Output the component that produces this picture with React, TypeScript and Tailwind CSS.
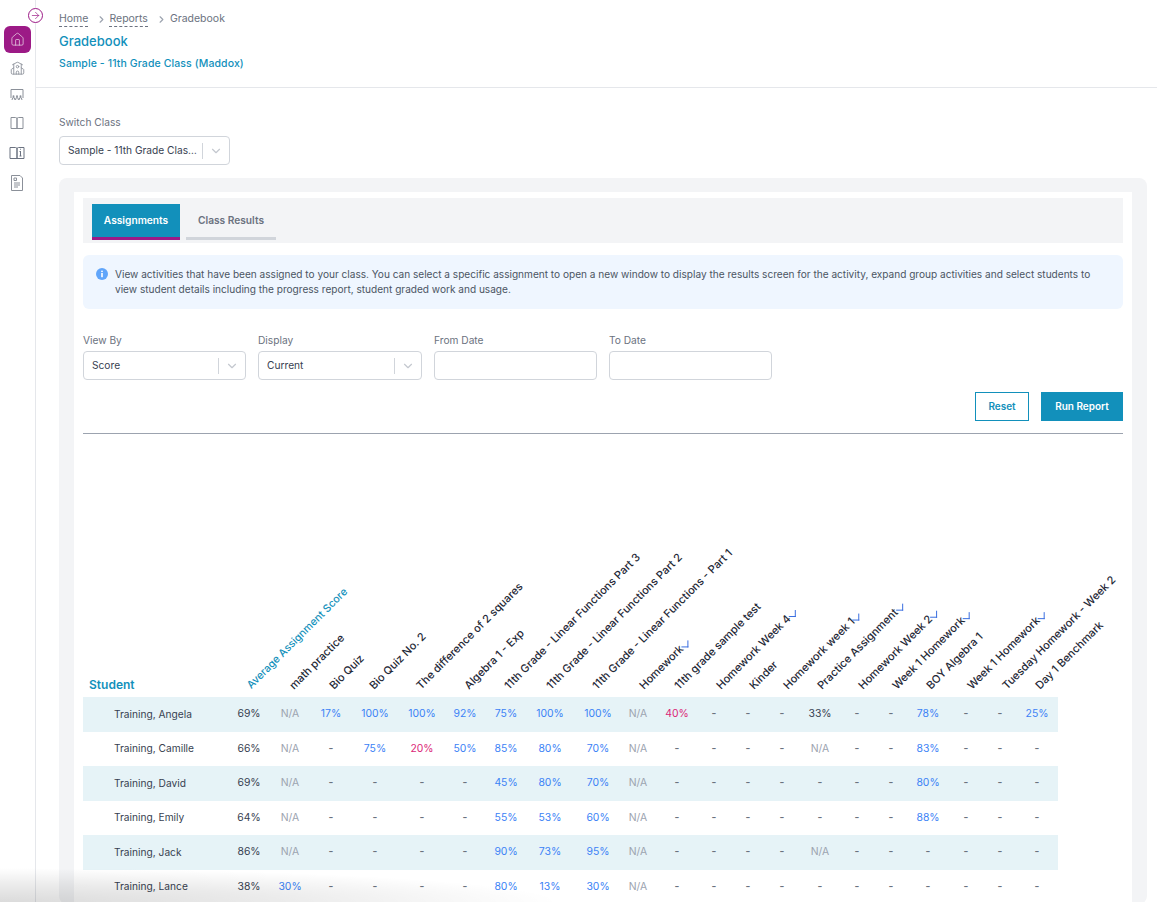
import { ArrowRight, ChevronDown, ChevronRight, House, School } from "lucide-react"

const columns = [
  { name: "Average Assignment Score", col: "w-[30px]", shift: "ml-[20px] text-[10.6px] text-[#1290bb]" },
  { name: "math practice", col: "w-[52px]", shift: "ml-[32px]" },
  { name: "Bio Quiz", col: "w-[30px]", shift: "ml-[20px]" },
  { name: "Bio Quiz No. 2", col: "w-[58px]", shift: "ml-[30px]" },
  { name: "The difference of 2 squares", col: "w-[36px]", shift: "ml-[19px]" },
  { name: "Algebra 1 - Exp", col: "w-[50px]", shift: "ml-[31px]" },
  { name: "11th Grade - Linear Functions Part 3", col: "w-[32px]", shift: "ml-[21px]" },
  { name: "11th Grade - Linear Functions Part 2", col: "w-[56px]", shift: "ml-[31px]" },
  { name: "11th Grade - Linear Functions - Part 1", col: "w-[40px]", shift: "ml-[21px]" },
  { name: "Homework", col: "w-[40px]", shift: "ml-[28px]", mark: true },
  { name: "11th grade sample test", col: "w-[38px]", shift: "ml-[23px]" },
  { name: "Homework Week 4", col: "w-[36px]", shift: "ml-[27px]", mark: true },
  { name: "Kinder", col: "w-[32px]", shift: "ml-[24px]" },
  { name: "Homework week 1", col: "w-[36px]", shift: "ml-[26px]", mark: true },
  { name: "Practice Assignment", col: "w-[40px]", shift: "ml-[24px]", mark: true },
  { name: "Homework Week 2", col: "w-[34px]", shift: "ml-[25px]", mark: true },
  { name: "Week 1 Homework", col: "w-[34px]", shift: "ml-[25px]", mark: true },
  { name: "BOY Algebra 1", col: "w-[40px]", shift: "ml-[25px]" },
  { name: "Week 1 Homework", col: "w-[36px]", shift: "ml-[26px]", mark: true },
  { name: "Tuesday Homework - Week 2", col: "w-[32px]", shift: "ml-[25px]" },
  { name: "Day 1 Benchmark", col: "w-[42px]", shift: "ml-[26px]" },
]

const students = [
  { name: "Training, Angela", scores: ["69%", "N/A", "17%", "100%", "100%", "92%", "75%", "100%", "100%", "N/A", "!40%", "-", "-", "-", "#33%", "-", "-", "78%", "-", "-", "25%"] },
  { name: "Training, Camille", scores: ["66%", "N/A", "-", "75%", "!20%", "50%", "85%", "80%", "70%", "N/A", "-", "-", "-", "-", "N/A", "-", "-", "83%", "-", "-", "-"] },
  { name: "Training, David", scores: ["69%", "N/A", "-", "-", "-", "-", "45%", "80%", "70%", "N/A", "-", "-", "-", "-", "-", "-", "-", "80%", "-", "-", "-"] },
  { name: "Training, Emily", scores: ["64%", "N/A", "-", "-", "-", "-", "55%", "53%", "60%", "N/A", "-", "-", "-", "-", "-", "-", "-", "88%", "-", "-", "-"] },
  { name: "Training, Jack", scores: ["86%", "N/A", "-", "-", "-", "-", "90%", "73%", "95%", "N/A", "-", "-", "-", "-", "N/A", "-", "-", "-", "-", "-", "-"] },
  { name: "Training, Lance", scores: ["38%", "30%", "-", "-", "-", "-", "80%", "13%", "30%", "N/A", "-", "-", "-", "-", "-", "-", "-", "-", "-", "-", "-"] },
]

const scoreColor = (v: string, i: number) => {
  if (i === 0 || v.startsWith("#")) return "text-[#374151]"
  if (v.startsWith("!")) return "text-[#db2777]"
  if (v === "N/A") return "text-[#9ca3af]"
  if (v === "-") return "text-[#6b7280] font-semibold"
  return "text-[#3b82f6]"
}

const ClassroomIcon = () => (
  <svg width="16" height="16" viewBox="0 0 16 16" fill="none" stroke="currentColor" strokeWidth="1">
    <path d="M2 11V2.500h12V11" />
    <circle cx="4.500" cy="9.300" r="1" fill="currentColor" stroke="none" />
    <circle cx="8" cy="9.300" r="1" fill="currentColor" stroke="none" />
    <circle cx="11.500" cy="9.300" r="1" fill="currentColor" stroke="none" />
    <path d="M3 13l.7-2.300h1.600L6 13M6.500 13l.7-2.300h1.600L9.500 13M10 13l.7-2.300h1.600L13 13" />
  </svg>
)

const BookIcon = () => (
  <svg width="16" height="16" viewBox="0 0 16 16" fill="none" stroke="currentColor" strokeWidth="1">
    <path d="M2 2.500h4.500A1.500 1.500 0 0 1 8 4v9.500H2zM14 2.500H9.500A1.500 1.500 0 0 0 8 4v9.500h6z" />
  </svg>
)

const BookInfoIcon = () => (
  <svg width="16" height="16" viewBox="0 0 16 16" fill="none" stroke="#6b7280" strokeWidth="1">
    <path d="M1 2.500h5.500A1.500 1.500 0 0 1 8 4v9.500H1zM15 2.500H9.500A1.500 1.500 0 0 0 8 4v9.500h7z" />
    <path d="M11.500 6v5M10.500 6.500h1M10.500 11h2M11.500 3.800v.9" />
  </svg>
)

const FileIcon = () => (
  <svg width="16" height="16" viewBox="0 0 16 16" fill="none" stroke="currentColor" strokeWidth="1">
    <path d="M2.500.5h8.500l2.500 2.500v12.500h-11z" />
    <path d="M5 3h2.500v2.500H5zM5 8h6M5 10h6M5 12h4" />
  </svg>
)

const InfoDot = () => (
  <svg width="12" height="12" viewBox="0 0 12 12" className="mt-[1px] shrink-0">
    <circle cx="6" cy="6" r="6" fill="#60a5fa" />
    <circle cx="6" cy="3.300" r="0.900" fill="#fff" />
    <rect x="5.200" y="5" width="1.600" height="4.200" fill="#fff" />
  </svg>
)

const Select = ({ value, width }: { value: string; width: string }) => (
  <div className={`flex h-[29px] items-center rounded border border-[#d1d5db] bg-white pl-2 pr-[6px] ${width}`}>
    <span className="min-w-0 flex-1 truncate text-[10.2px] text-[#374151]">{value}</span>
    <span className="h-[16px] w-px bg-[#d1d5db]" />
    <ChevronDown size={14} className="ml-[6px] text-[#c4c8cf]" />
  </div>
)

const Filter = ({ label, width, children }: { label: string; width: string; children: React.ReactNode }) => (
  <div className={`flex flex-col gap-[4px] ${width}`}>
    <label className="h-[14px] text-[10.2px] leading-[14px] text-[#6b7280]">{label}</label>
    {children}
  </div>
)

export default function App() {
  return (
    <div className="relative flex h-[902px] w-[1157px] overflow-hidden bg-white font-['Inter',sans-serif]">
      <aside className="flex w-[36px] shrink-0 flex-col items-center border-r border-[#e5e7eb] pt-[26px] pr-[1px] text-[#8b9099]">
        <div className="flex h-[27px] w-[27px] items-center justify-center rounded-md bg-[#9c1a86] text-[#e9d5e6]">
          <House size={15} strokeWidth={1.200} />
        </div>
        <div className="mt-[7px] flex h-[16px] items-center"><School size={15} strokeWidth={1.400} /></div>
        <div className="mt-[11px] flex h-[16px] items-center"><ClassroomIcon /></div>
        <div className="mt-[12px] flex h-[16px] items-center"><BookIcon /></div>
        <div className="mt-[14px] flex h-[16px] items-center"><BookInfoIcon /></div>
        <div className="mt-[14px] flex h-[16px] items-center"><FileIcon /></div>
      </aside>
      <div className="absolute left-[28px] top-[8px] flex h-[15px] w-[15px] items-center justify-center rounded-full border border-[#9c1a86] bg-white text-[#9c1a86]">
        <ArrowRight size={11} strokeWidth={1.500} />
      </div>

      <main className="flex-1">
        <header className="h-[88px] border-b border-[#e5e7eb] pl-[23px] pt-[11px]">
          <nav className="flex h-[16px] items-center text-[10.5px] text-[#6b7280]">
            <span className="border-b border-dashed border-[#6b7280] leading-[14px]">Home</span>
            <ChevronRight size={11} className="ml-[8px] mr-[2px] text-[#9ca3af]" strokeWidth={2.500} />
            <span className="border-b border-dashed border-[#6b7280] leading-[14px]">Reports</span>
            <ChevronRight size={11} className="ml-[8px] mr-[3px] text-[#9ca3af]" strokeWidth={2.500} />
            <span className="leading-[14px]">Gradebook</span>
          </nav>
          <h1 className="mt-[5px] text-[13px] font-medium leading-[18px] text-[#1290bb]">Gradebook</h1>
          <p className="mt-[7px] text-[10.5px] font-medium leading-[14px] tracking-[0.1px] text-[#1290bb]">Sample - 11th Grade Class (Maddox)</p>
        </header>

        <section className="px-[23px] pt-[27px]">
          <label className="block h-[14px] text-[10.2px] leading-[14px] text-[#6b7280]">Switch Class</label>
          <div className="mt-[7px]">
            <Select value="Sample - 11th Grade Class (Maddox)" width="w-[171px]" />
          </div>
        </section>

        <section className="ml-[23px] mt-[13px] w-[1088px] rounded-lg bg-[#f3f4f6] px-[15px] pt-[14px]">
          <div className="bg-white px-[9px] pt-[6px]">
            <div className="flex h-[45px] gap-[6px] bg-[#f3f4f6] pl-[9px] pt-[6px]">
              <div className="flex h-[36px] w-[88px] items-center justify-center border-b-[3px] border-[#9c1a86] bg-[#1290bb] text-[10.2px] font-semibold text-white">Assignments</div>
              <div className="flex h-[36px] w-[90px] items-center justify-center border-b-[3px] border-[#d1d5db] text-[10.2px] font-semibold text-[#6b7280]">Class Results</div>
            </div>

            <div className="mt-[12px] flex h-[54px] gap-[7px] rounded-md bg-[#eff6ff] pl-[13px] pr-[16px] pt-[12px] text-[10.08px] leading-[15px] text-[#4b5563]">
              <InfoDot />
              <p>View activities that have been assigned to your class. You can select a specific assignment to open a new window to display the results screen for the activity, expand group activities and select students to view student details including the progress report, student graded work and usage.</p>
            </div>

            <div className="mt-[24px] flex gap-[12px]">
              <Filter label="View By" width="w-[163px]"><Select value="Score" width="w-[163px]" /></Filter>
              <Filter label="Display" width="w-[164px]"><Select value="Current" width="w-[164px]" /></Filter>
              <Filter label="From Date" width="w-[163px]"><input className="h-[29px] rounded border border-[#d1d5db] bg-white" /></Filter>
              <Filter label="To Date" width="w-[163px]"><input className="h-[29px] rounded border border-[#d1d5db] bg-white" /></Filter>
            </div>

            <div className="mt-[12px] flex justify-end gap-[12px]">
              <button className="h-[29px] w-[54px] border border-[#1290bb] text-[10px] font-semibold text-[#1290bb]">Reset</button>
              <button className="h-[29px] w-[82px] bg-[#1290bb] text-[10px] font-semibold text-white">Run Report</button>
            </div>

            <div className="mt-[12px] h-px bg-[#9ca3af]" />

            <table className="w-[975px] table-fixed border-collapse">
              <colgroup>
                <col className="w-[151px]" />
                {columns.map((c, i) => <col key={i} className={c.col} />)}
              </colgroup>
              <thead>
                <tr className="h-[263px]">
                  <th className="pb-[4px] pl-[6px] text-left align-bottom text-xs font-semibold text-[#1290bb]">Student</th>
                  {columns.map((c, i) => (
                    <th key={i} className="pb-[5px] align-bottom">
                      <div className={`flex h-[14px] w-0 origin-bottom-left -rotate-45 items-center whitespace-nowrap font-medium leading-[14px] ${c.shift.includes("text-") ? "" : "text-[11px] text-[#1f2937]"} ${c.shift}`}>
                        {c.name}
                        {c.mark && <span className="ml-[1px] mt-[1px] inline-block h-[7px] w-[7px] shrink-0 rotate-45 border-b-[1.5px] border-r-[1.5px] border-[#3b6fe0]" />}
                      </div>
                    </th>
                  ))}
                </tr>
              </thead>
              <tbody>
                {students.map((s, r) => (
                  <tr key={s.name} className={`h-[34.5px] ${r % 2 === 0 ? "bg-[#e6f3f7]" : ""}`}>
                    <td className="pl-[31px] text-[10.2px] text-[#374151]">{s.name}</td>
                    {s.scores.map((v, i) => (
                      <td key={i} className={`text-center text-[10.4px] ${scoreColor(v, i)}`}>{v.replace(/^[!#]/, "")}</td>
                    ))}
                  </tr>
                ))}
              </tbody>
            </table>
          </div>
        </section>
      </main>

      <div className="pointer-events-none absolute bottom-0 left-0 h-[34px] w-[560px] bg-[radial-gradient(560px_34px_at_bottom_left,#00000024_0%,#00000014_50%,transparent_100%)]" />
    </div>
  )
}
